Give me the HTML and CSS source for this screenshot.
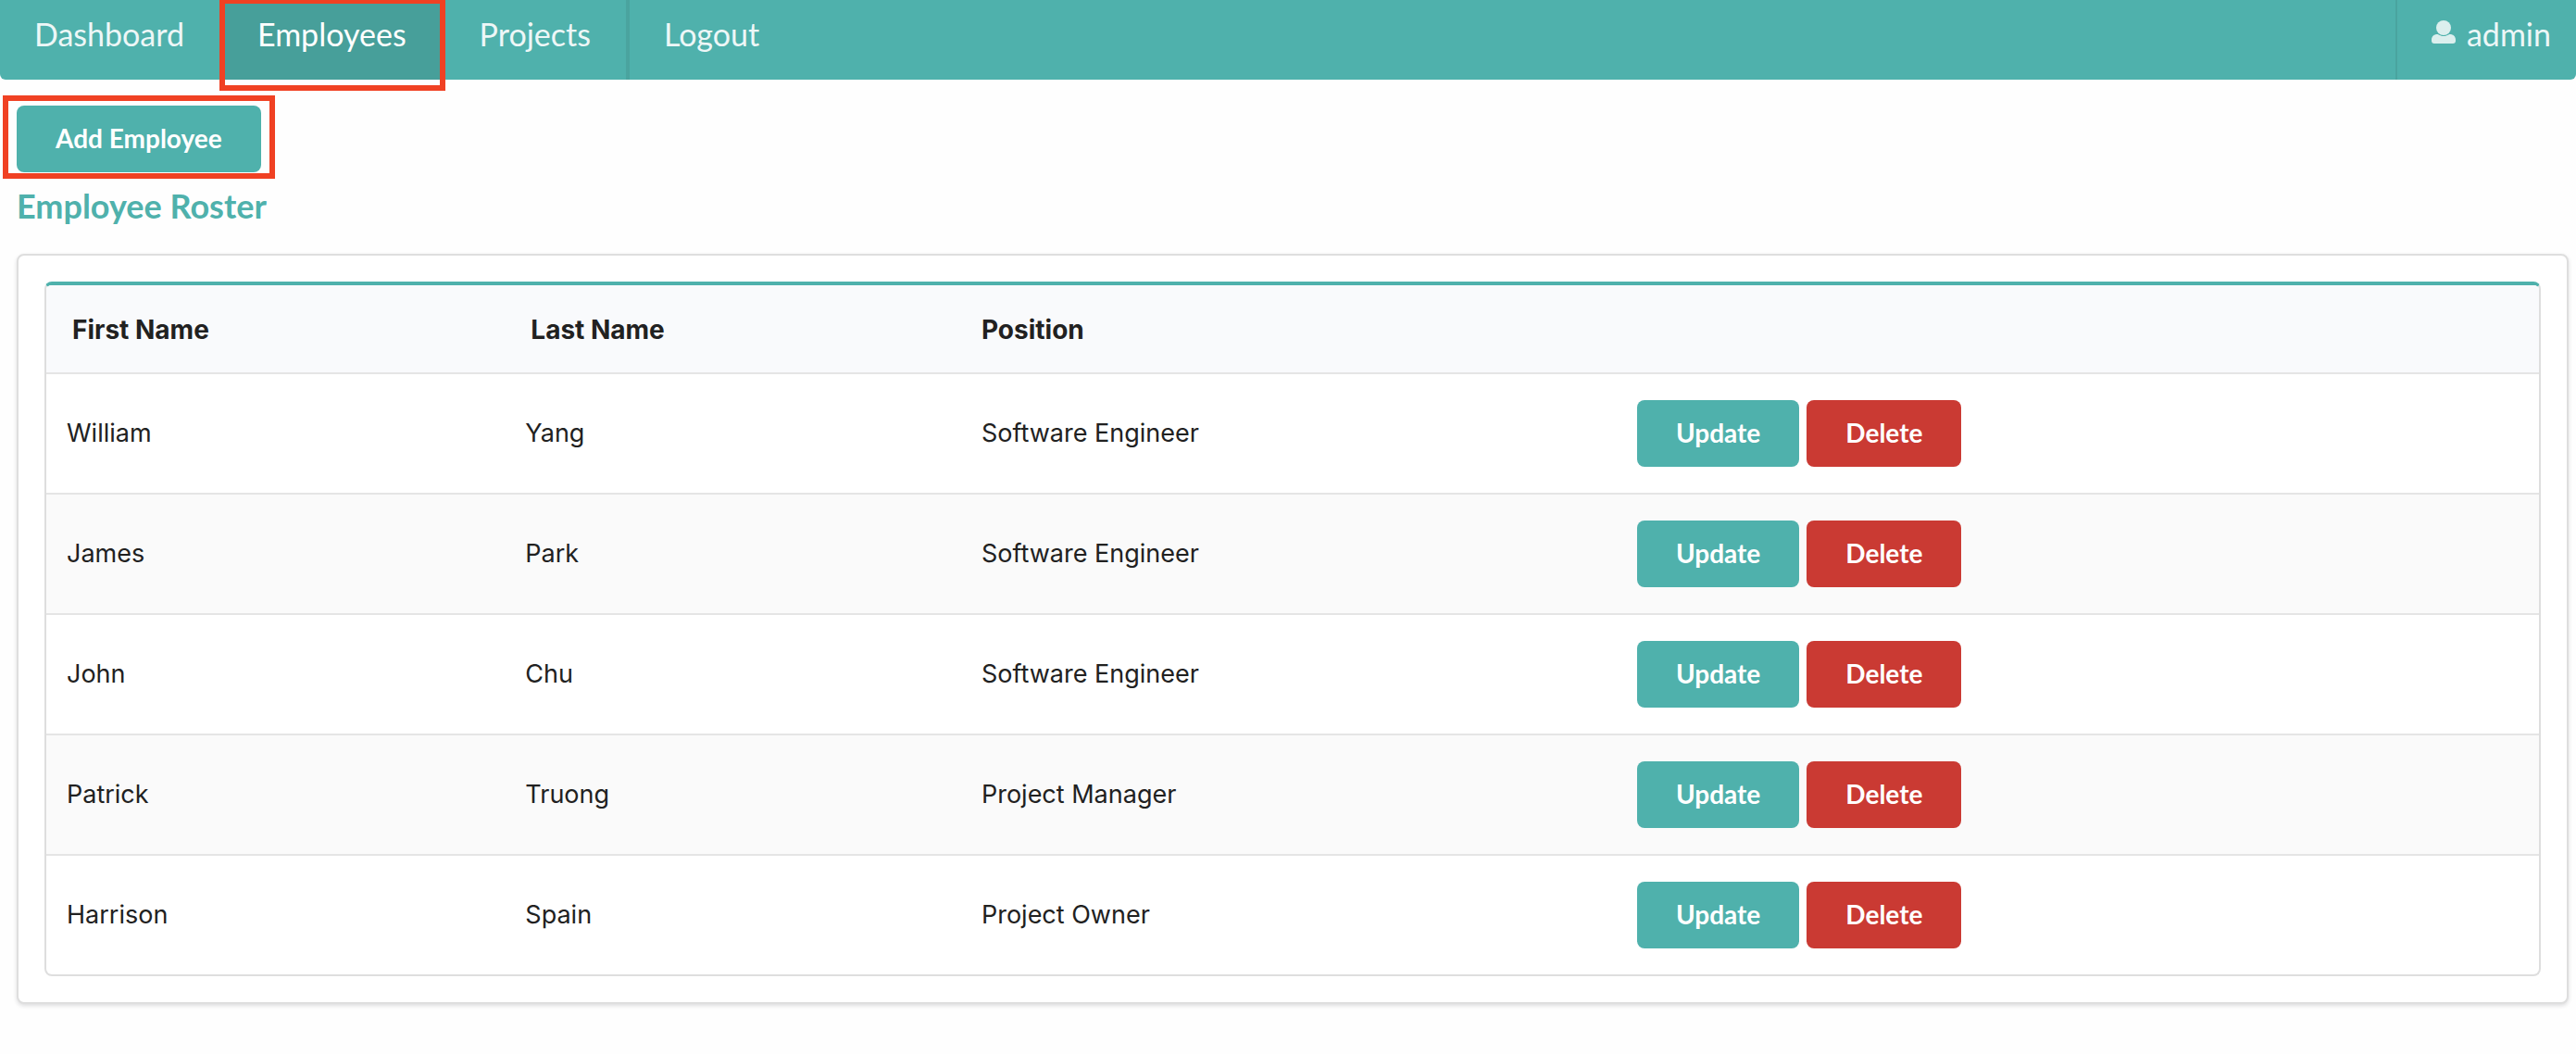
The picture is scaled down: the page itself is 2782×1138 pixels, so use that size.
FILE: index.html
```html
<!DOCTYPE html>
<html lang="en">
<head>
<meta charset="utf-8">
<title>Employee Roster</title>
<link rel="stylesheet" href="styles.css">
</head>
<body>
<nav class="menu">
  <a class="item" href="#">Dashboard</a>
  <a class="item active highlighted" href="#">Employees</a>
  <a class="item" href="#">Projects</a>
  <a class="item last" href="#">Logout</a>
  <a class="item user" href="#">
    <svg class="user-icon" viewBox="0 0 26 26" aria-hidden="true"><circle cx="13" cy="8" r="8"/><path d="M0 22v-1c0-4 3-6 6-6 2 0 3 2 7 2s5-2 7-2c3 0 6 2 6 6v1c0 2-1 3-3 3H3c-2 0-3-1-3-3z"/></svg>
    admin
  </a>
</nav>
<main class="content">
  <div class="add highlighted"><button class="button" type="button">Add Employee</button></div>
  <h1 class="title">Employee Roster</h1>
  <section class="segment">
    <table class="table">
      <colgroup><col class="col-first"><col class="col-last"><col class="col-position"><col></colgroup>
      <thead>
        <tr><th scope="col">First Name</th><th scope="col">Last Name</th><th class="position" scope="col">Position</th><td></td></tr>
      </thead>
      <tbody>
        <tr><td>William</td><td>Yang</td><td>Software Engineer</td><td><div class="actions"><button class="button" type="button">Update</button><button class="button negative" type="button">Delete</button></div></td></tr>
        <tr><td>James</td><td>Park</td><td>Software Engineer</td><td><div class="actions"><button class="button" type="button">Update</button><button class="button negative" type="button">Delete</button></div></td></tr>
        <tr><td>John</td><td>Chu</td><td>Software Engineer</td><td><div class="actions"><button class="button" type="button">Update</button><button class="button negative" type="button">Delete</button></div></td></tr>
        <tr><td>Patrick</td><td>Truong</td><td>Project Manager</td><td><div class="actions"><button class="button" type="button">Update</button><button class="button negative" type="button">Delete</button></div></td></tr>
        <tr><td>Harrison</td><td>Spain</td><td>Project Owner</td><td><div class="actions"><button class="button" type="button">Update</button><button class="button negative" type="button">Delete</button></div></td></tr>
      </tbody>
    </table>
  </section>
</main>
</body>
</html>
```
FILE: styles.css
```css
* { box-sizing: border-box; }

body {
  margin: 0;
  background: #fefefe;
  color: #212121;
  font: 27px/40px Inter, "Liberation Sans", sans-serif;
}

.menu {
  display: flex;
  background: #4fb1ac;
  border-radius: 0 0 6px 6px;
  font: 34px/44px Lato, sans-serif;
}

.item {
  position: relative;
  display: flex;
  padding: 15px 38px 27px 37px;
  border-right: 4px solid #4aa49f;
  color: #edf7f7;
  text-decoration: none;
}

.item.active { background: #479f9a; color: #fff; }
.item.last { border-right: 0; }

.item.user {
  gap: 12px;
  margin-left: auto;
  padding-right: 27px;
  border-right: 0;
  border-left: 2px solid #4aa49f;
}

.user-icon {
  width: 26px;
  height: 26px;
  margin-top: 7px;
  fill: #dcefee;
}

/* Red callout frames */
.highlighted { position: relative; }

.highlighted::after {
  content: "";
  position: absolute;
  inset: -11px -15px -7px;
  border: 6px solid #f04123;
  pointer-events: none;
}

.item.highlighted::after { inset: -2px -4px -12px; }

.content { padding: 28px 8px 54px 18px; }

.add { width: fit-content; }

.button {
  display: block;
  padding: 15px 42px 17px;
  border: 0;
  border-radius: 8px;
  background: #4fb1ac;
  color: #fff;
  font: bold 28px/40px Lato, sans-serif;
  cursor: pointer;
}

.button.negative { background: #ca3a33; }

.title {
  margin: 13px 0 29px;
  color: #4fb1ac;
  font: bold 36px/46px Lato, sans-serif;
}

.segment {
  padding: 28px;
  border: 2px solid #dedede;
  border-radius: 8px;
  background: #fff;
  box-shadow: 0 2px 4px rgba(34, 36, 38, 0.15);
}

.table {
  width: 100%;
  table-layout: fixed;
  border: 2px solid #dedede;
  border-top: 4px solid #4fb1ac;
  border-radius: 8px;
  border-collapse: separate;
  border-spacing: 0;
  overflow: hidden;
}

.col-first { width: 18.4%; }
.col-last { width: 18.3%; }
.col-position { width: 26.3%; }

.table th,
.table td {
  padding: 28px 22px;
  border-bottom: 2px solid #e5e5e5;
  text-align: left;
}

.table th { padding-left: 28px; font-size: 28px; font-weight: 700; }
.table th.position { padding-left: 22px; }
.table thead { background: #f9fafc; }
.table thead th,
.table thead td { padding-bottom: 26px; }
.table tbody tr:nth-child(even) { background: #fafafa; }
.table tbody tr:last-child td { border-bottom: 0; }

.actions { display: flex; gap: 8px; }
```
